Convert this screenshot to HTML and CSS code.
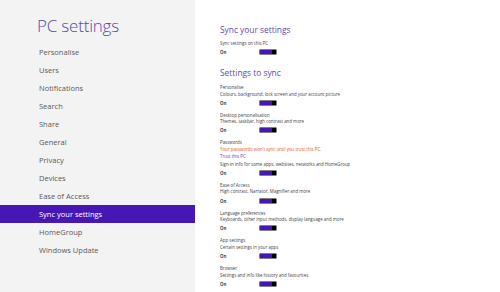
FILE: index.html
```html
<!DOCTYPE html>
<html lang="en">
<head>
    <meta charset="UTF-8">
    <meta name="viewport" content="width=device-width, initial-scale=1.0">
    <title>PC settings</title>
    <link rel="stylesheet" href="styles.css">
</head>
<body>
    <div class="page">
        <nav class="sidebar">
            <h1 class="title">PC settings</h1>
            <ul class="menu">
                <li>Personalise</li>
                <li>Users</li>
                <li>Notifications</li>
                <li>Search</li>
                <li>Share</li>
                <li>General</li>
                <li>Privacy</li>
                <li>Devices</li>
                <li>Ease of Access</li>
                <li class="active">Sync your settings</li>
                <li>HomeGroup</li>
                <li>Windows Update</li>
            </ul>
        </nav>

        <main class="content">
            <h2 class="heading">Sync your settings</h2>
            <div class="setting first">
                <div class="label">Sync settings on this PC</div>
                <div class="state"><span>On</span><span class="toggle"></span></div>
            </div>

            <h2 class="heading second">Settings to sync</h2>
            <div class="setting">
                <div class="label">Personalise</div>
                <div class="desc">Colours, background, lock screen and your account picture</div>
                <div class="state"><span>On</span><span class="toggle"></span></div>
            </div>
            <div class="setting">
                <div class="label">Desktop personalisation</div>
                <div class="desc">Themes, taskbar, high contrast and more</div>
                <div class="state"><span>On</span><span class="toggle"></span></div>
            </div>
            <div class="setting">
                <div class="label">Passwords</div>
                <div class="desc warn">Your passwords won't sync until you trust this PC.</div>
                <div class="desc link">Trust this PC</div>
                <div class="desc signin">Sign-in info for some apps, websites, networks and HomeGroup</div>
                <div class="state"><span>On</span><span class="toggle"></span></div>
            </div>
            <div class="setting">
                <div class="label">Ease of Access</div>
                <div class="desc">High contrast, Narrator, Magnifier and more</div>
                <div class="state"><span>On</span><span class="toggle"></span></div>
            </div>
            <div class="setting">
                <div class="label">Language preferences</div>
                <div class="desc">Keyboards, other input methods, display language and more</div>
                <div class="state"><span>On</span><span class="toggle"></span></div>
            </div>
            <div class="setting">
                <div class="label">App settings</div>
                <div class="desc">Certain settings in your apps</div>
                <div class="state"><span>On</span><span class="toggle"></span></div>
            </div>
            <div class="setting">
                <div class="label">Browser</div>
                <div class="desc">Settings and info like history and favourites</div>
                <div class="state"><span>On</span><span class="toggle"></span></div>
            </div>
            <div class="setting">
                <div class="label">Other Windows settings</div>
            </div>
        </main>
    </div>
</body>
</html>
```

FILE: styles.css
```css
html, body {
    margin: 0;
    padding: 0;
    height: 100%;
    overflow: hidden;
}

body {
    font-family: 'Open Sans', 'Noto Sans', sans-serif;
    background-color: #ffffff;
}

.page {
    display: flex;
    height: 292px;
}

.sidebar {
    width: 195px;
    flex-shrink: 0;
    background-color: #f3f3f3;
}

.title {
    margin: 0;
    padding: 14px 0 0 37px;
    height: 29px;
    box-sizing: border-box;
    font-size: 17px;
    line-height: 24px;
    font-weight: 300;
    color: #5e45aa;
    letter-spacing: -0.2px;
}

.menu {
    list-style: none;
    margin: 14px 0 0;
    padding: 0;
}

.menu li {
    height: 18px;
    line-height: 18px;
    padding-left: 39px;
    font-size: 7.5px;
    color: #595959;
}

.menu li.active {
    background-color: #4617b4;
    color: #fff;
}

.content {
    flex: 1;
    padding: 22px 0 0 25px;
    color: #444;
}

.heading {
    margin: 0;
    font-size: 8.4px;
    line-height: 16px;
    font-weight: 400;
    color: #6449ad;
}

.heading.second {
    margin-top: 9px;
}

.setting {
    margin-top: 3px;
    margin-bottom: 5px;
    font-size: 4.4px;
}

.setting.first {
    margin-top: 2px;
}

.label, .desc {
    line-height: 6.6px;
    white-space: nowrap;
}

.desc.warn {
    color: #e0562a;
}

.desc.link {
    color: #5e45aa;
}

.desc.signin {
    margin-top: 1.5px;
}

.state {
    display: flex;
    align-items: center;
    height: 8px;
    margin-top: 1.5px;
    font-weight: 700;
}

.state span:first-child {
    width: 40px;
}

.toggle {
    width: 12px;
    height: 4px;
    background-color: #4617b4;
    border-right: 4px solid #000;
    box-shadow: 0 0 0 0.5px #000;
}
```
